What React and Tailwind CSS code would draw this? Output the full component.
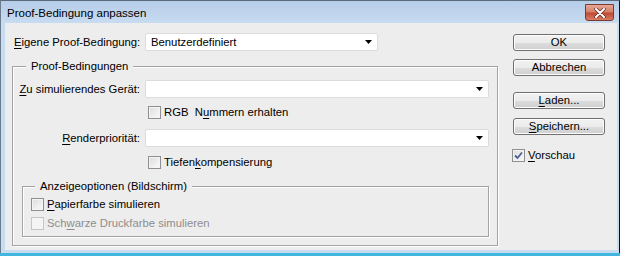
import React from "react";

const btn =
  "h-[17px] w-[92px] flex items-center justify-center rounded-[3px] border border-[#707070] bg-[linear-gradient(#f2f2f2_0%,#ebebeb_50%,#dddddd_51%,#cfcfcf_100%)] shadow-[inset_0_0_0_1px_#fcfcfc] text-black";

const Checkbox = ({ checked, disabled }) => (
  <span
    className={`w-[13px] h-[13px] shrink-0 flex items-center justify-center border ${
      disabled
        ? "border-[#c6c6c6] bg-[#f4f4f4]"
        : "border-[#8e8f8f] bg-[linear-gradient(135deg,#dcdcdc,#fbfbfb)] shadow-[inset_0_0_0_1px_#f4f4f4]"
    }`}
  >
    {checked && (
      <svg width="9" height="9" viewBox="0 0 9 9">
        <path d="M1 4.5 L3.5 7 L8 1.5" fill="none" stroke="#4a5f97" strokeWidth="1.8" />
      </svg>
    )}
  </span>
);

const Select = ({ value, className }) => (
  <div
    className={`h-[18px] shrink-0 flex items-center justify-between rounded-[2px] border border-[#dcdcdc] bg-white pl-[5px] pr-[5px] ${className}`}
  >
    <span>{value}</span>
    <svg width="7" height="4" viewBox="0 0 7 4">
      <path d="M0 0 H7 L3.5 4 Z" fill="#000" />
    </svg>
  </div>
);

const U = ({ children }) => <span className="underline underline-offset-2">{children}</span>;

export default function App() {
  return (
    <div className="w-[620px] h-[256px] overflow-hidden bg-[#41b6de] font-['Liberation_Sans',Arial,sans-serif] text-[11.3px] whitespace-nowrap text-black">
      <div className="h-[253px] flex flex-col bg-[#c7dbf1] border-t border-x border-t-[#596a7c] border-l-[#6c7c8c] border-r-[#111] pl-[4px] pr-[2px] pb-[3px]">
        {/* title bar */}
        <div className="h-[22px] shrink-0 -ml-[4px] -mr-[2px] pl-[6px] pr-[5px] flex items-start justify-between bg-[linear-gradient(#b6cde8,#c7dbf1)]">
          <span className="mt-[5px] leading-[14px] text-[11.5px]">Proof-Bedingung anpassen</span>
          <div className="mt-[3px] w-[29px] h-[17px] rounded-b-[3px] border border-[#7e3a2e] bg-[linear-gradient(#e7a898_0%,#d5806b_45%,#c24a34_55%,#d67e65_100%)] flex items-center justify-center">
            <svg width="12" height="10" viewBox="0 0 12 10">
              <path d="M2 1 L10 9 M10 1 L2 9" stroke="#5b2a22" strokeWidth="3.4" strokeLinecap="round" />
              <path d="M2 1 L10 9 M10 1 L2 9" stroke="#ffffff" strokeWidth="2" strokeLinecap="round" />
            </svg>
          </div>
        </div>
        {/* content */}
        <div className="flex-1 bg-[#ededed] flex pl-[7px]">
          <div className="w-[486px] shrink-0 flex flex-col pt-[10px]">
            <div className="h-[18px] flex items-center">
              <span className="w-[133px] shrink-0 pl-[2px]">
                <U>E</U>igene Proof-Bedingung:
              </span>
              <Select value="Benutzerdefiniert" className="w-[233px]" />
            </div>

            <div className="relative mt-[15px] border border-[#a3a3a3] shadow-[inset_1px_1px_0_#ffffff,1px_1px_0_#ffffff] pt-[13px] pb-[8px] pr-[8px]">
              <span className="absolute -top-[8px] left-[13px] px-[5px] leading-[14px] bg-[#ededed]">
                Proof-Bedingungen
              </span>
              <div className="flex items-center">
                <span className="w-[132px] shrink-0 pr-[5px] text-right">
                  <U>Z</U>u simulierendes Gerät:
                </span>
                <Select value="" className="w-[344px]" />
              </div>
              <div className="mt-[8px] h-[13px] pl-[135px] flex items-center gap-[3px]">
                <Checkbox />
                <span className="whitespace-pre">
                  RGB  N<U>u</U>mmern erhalten
                </span>
              </div>
              <div className="mt-[10px] flex items-center">
                <span className="w-[132px] shrink-0 pr-[5px] text-right">
                  <U>R</U>enderpriorität:
                </span>
                <Select value="" className="w-[344px]" />
              </div>
              <div className="mt-[9px] h-[13px] pl-[135px] flex items-center gap-[3px]">
                <Checkbox />
                <span>
                  Tiefen<U>k</U>ompensierung
                </span>
              </div>

              <div className="relative ml-[9px] mt-[17px] w-[467px] border border-[#a3a3a3] shadow-[inset_1px_1px_0_#ffffff,1px_1px_0_#ffffff] pt-[11px] pb-[6px] pl-[8px]">
                <span className="absolute -top-[8px] left-[12px] px-[5px] leading-[14px] bg-[#ededed]">
                  Anzeigeoptionen (Bildschirm)
                </span>
                <div className="h-[13px] flex items-center gap-[3px]">
                  <Checkbox />
                  <span>
                    <U>P</U>apierfarbe simulieren
                  </span>
                </div>
                <div className="mt-[6px] h-[13px] flex items-center gap-[3px] text-[#8d8d8d]">
                  <Checkbox disabled />
                  <span>
                    Sch<U>w</U>arze Druckfarbe simulieren
                  </span>
                </div>
              </div>
            </div>
          </div>

          <div className="ml-[15px] flex flex-col pt-[11px]">
            <div className={`${btn} border-[#3c7fb1] bg-[linear-gradient(#eaf6fd_0%,#d9f0fc_50%,#bee6fd_51%,#a7d9f5_100%)] shadow-[inset_0_0_0_1px_#48d1fd]`}>
              OK
            </div>
            <div className={`${btn} mt-[8px]`}>Abbrechen</div>
            <div className={`${btn} mt-[16px]`}>
              <span>
                <U>L</U>aden...
              </span>
            </div>
            <div className={`${btn} mt-[9px]`}>
              <span>
                <U>S</U>peichern...
              </span>
            </div>
            <div className="mt-[14px] h-[13px] flex items-center gap-[3px] -ml-[1px]">
              <Checkbox checked />
              <span>
                <U>V</U>orschau
              </span>
            </div>
          </div>
        </div>
      </div>
    </div>
  );
}
